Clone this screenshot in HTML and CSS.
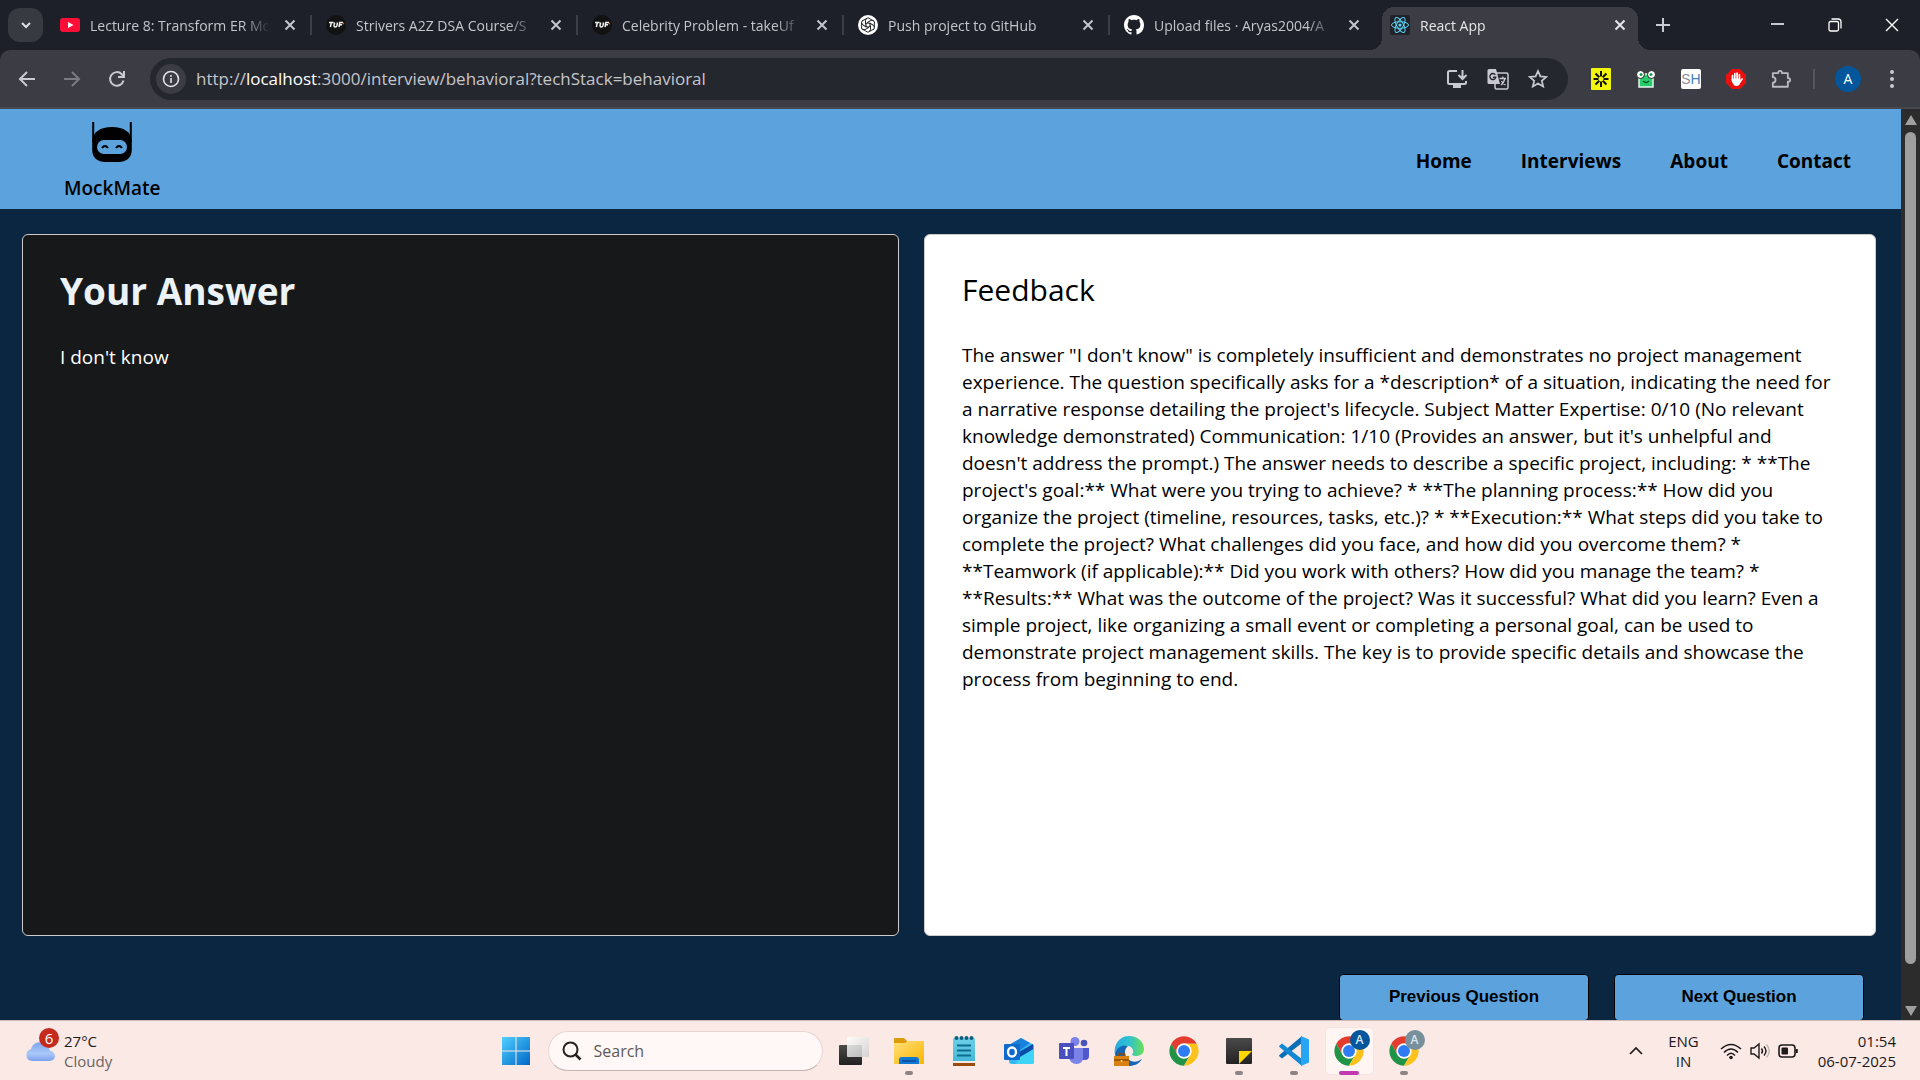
FILE: index.html
```html
<!DOCTYPE html>
<html lang="en">
<head>
<meta charset="utf-8">
<title>React App</title>
<link rel="stylesheet" href="styles.css">
</head>
<body>
<svg class="defs" width="0" height="0" aria-hidden="true">
  <defs>
    <linearGradient id="g-win" x1="0" y1="0" x2="1" y2="1"><stop offset="0" stop-color="#4fd0ff"/><stop offset="1" stop-color="#0067c8"/></linearGradient>
    <linearGradient id="g-dark" x1="0" y1="0" x2="0" y2="1"><stop offset="0" stop-color="#4a4a4a"/><stop offset="1" stop-color="#222"/></linearGradient>
    <linearGradient id="g-light" x1="0" y1="0" x2="1" y2="1"><stop offset="0" stop-color="#ffffff"/><stop offset="1" stop-color="#cfcfcf"/></linearGradient>
    <linearGradient id="g-folder" x1="0" y1="0" x2="1" y2="1"><stop offset="0" stop-color="#ffe07a"/><stop offset="1" stop-color="#f9b500"/></linearGradient>
    <linearGradient id="g-note" x1="0" y1="0" x2="0" y2="1"><stop offset="0" stop-color="#6fd0ea"/><stop offset="1" stop-color="#3fb4d6"/></linearGradient>
    <linearGradient id="g-edge" x1="0" y1="0" x2="1" y2="0"><stop offset="0" stop-color="#2aa9e0"/><stop offset=".5" stop-color="#2fc3cf"/><stop offset="1" stop-color="#6be052"/></linearGradient>
    <linearGradient id="g-cloud" x1="0" y1="0" x2="0" y2="1"><stop offset="0" stop-color="#7fa4ee"/><stop offset=".6" stop-color="#a9c8f8"/><stop offset="1" stop-color="#7ea2ec"/></linearGradient>
    <symbol id="close" viewBox="0 0 20 20"><path d="M5.500 5.500l9 9M14.500 5.500l-9 9" fill="none" stroke="currentColor" stroke-width="2"/></symbol>
    <symbol id="tuf" viewBox="0 0 20 20"><circle cx="10" cy="10" r="10" fill="#121212"/><path d="M3 7.500h4.500M5.300 7.500l-.9 4.500M8.600 7.500l-.6 3.200q0 1.200 1.300 1.200t1.600-1.200l.6-3.200M13 12l.8-4.500H17M13.400 9.800h2.600" fill="none" stroke="#f1f1f1" stroke-width="1.500"/><circle cx="17.300" cy="8.500" r=".9" fill="#d5562c"/></symbol>
    <symbol id="chrome" viewBox="0 0 48 48"><path d="M4.950 13A22 22 0 0 1 43.050 13L43.050 13H24L14.500 29.500z" fill="#e33b2e"/><path d="M4.950 13A22 22 0 0 0 24 46l9.500-16.500h-19z" fill="#1f9346"/><path d="M43.050 13A22 22 0 0 1 24 46l9.500-16.500L24 13z" fill="#fcc21b"/><circle cx="24" cy="24" r="11.500" fill="#fff"/><circle cx="24" cy="24" r="9" fill="#2f7bf2"/></symbol>
  </defs>
</svg>

<header class="browser">
  <div class="tabstrip">
    <button class="tab-search" aria-label="Search tabs"><svg width="16" height="16" viewBox="0 0 16 16"><path d="M4 6l4 4 4-4" fill="none" stroke="#dfe0e6" stroke-width="2"/></svg></button>
    <div class="tabs">
      <div class="tab">
        <svg class="fav" viewBox="0 0 20 20"><rect y="3" width="20" height="14" rx="3" fill="#ff0f38"/><path d="M8 7l5.500 3L8 13z" fill="#fff"/></svg>
        <span class="tab-title">Lecture 8: Transform ER Mo</span>
        <button class="tab-close" aria-label="Close tab"><svg><use href="#close"/></svg></button>
      </div>
      <div class="tab">
        <svg class="fav"><use href="#tuf"/></svg>
        <span class="tab-title">Strivers A2Z DSA Course/S</span>
        <button class="tab-close" aria-label="Close tab"><svg><use href="#close"/></svg></button>
      </div>
      <div class="tab">
        <svg class="fav"><use href="#tuf"/></svg>
        <span class="tab-title">Celebrity Problem - takeUf</span>
        <button class="tab-close" aria-label="Close tab"><svg><use href="#close"/></svg></button>
      </div>
      <div class="tab">
        <svg class="fav" viewBox="0 0 20 20"><circle cx="10" cy="10" r="10" fill="#fff"/><g fill="none" stroke="#222" stroke-width="1"><path id="petal" d="M10 7.700L7.500 9.200V5.500a2.600 2.600 0 0 1 4.700-1.500L15 5.700"/><use href="#petal" transform="rotate(60 10 10)"/><use href="#petal" transform="rotate(120 10 10)"/><use href="#petal" transform="rotate(180 10 10)"/><use href="#petal" transform="rotate(240 10 10)"/><use href="#petal" transform="rotate(300 10 10)"/></g></svg>
        <span class="tab-title">Push project to GitHub</span>
        <button class="tab-close" aria-label="Close tab"><svg><use href="#close"/></svg></button>
      </div>
      <div class="tab tab-last">
        <svg class="fav" viewBox="0 0 16 16"><path fill="#fff" d="M8 0C3.580 0 0 3.580 0 8c0 3.540 2.290 6.530 5.470 7.590.4.070.55-.17.55-.38 0-.19-.01-.82-.01-1.490-2.010.37-2.530-.49-2.690-.94-.09-.23-.48-.94-.82-1.130-.28-.15-.68-.52-.01-.53.63-.01 1.080.58 1.230.82.72 1.210 1.870.87 2.330.66.07-.52.28-.87.51-1.070-1.780-.2-3.640-.89-3.640-3.950 0-.87.31-1.590.82-2.150-.08-.2-.36-1.020.08-2.120 0 0 .67-.21 2.200.82.64-.18 1.320-.27 2-.27s1.360.09 2 .27c1.530-1.040 2.200-.82 2.200-.82.44 1.100.16 1.920.08 2.120.51.56.82 1.270.82 2.150 0 3.070-1.870 3.750-3.650 3.950.29.25.54.73.54 1.480 0 1.070-.01 1.930-.01 2.200 0 .21.15.46.55.38A8.010 8.010 0 0 0 16 8c0-4.420-3.580-8-8-8z"/></svg>
        <span class="tab-title">Upload files · Aryas2004/A</span>
        <button class="tab-close" aria-label="Close tab"><svg><use href="#close"/></svg></button>
      </div>
      <div class="tab tab-active">
        <svg class="fav" viewBox="0 0 20 20"><rect width="20" height="20" rx="2" fill="#20232a"/><g fill="none" stroke="#5fd3f3" stroke-width="1"><ellipse cx="10" cy="10" rx="8.500" ry="3.300"/><ellipse cx="10" cy="10" rx="8.500" ry="3.300" transform="rotate(60 10 10)"/><ellipse cx="10" cy="10" rx="8.500" ry="3.300" transform="rotate(120 10 10)"/></g><circle cx="10" cy="10" r="1.600" fill="#5fd3f3"/></svg>
        <span class="tab-title">React App</span>
        <button class="tab-close" aria-label="Close tab"><svg><use href="#close"/></svg></button>
      </div>
    </div>
    <button class="new-tab" aria-label="New tab"><svg width="14" height="14" viewBox="0 0 14 14"><path d="M7 0v14M0 7h14" stroke="#c9cad1" stroke-width="2"/></svg></button>
    <div class="window-controls">
      <button aria-label="Minimize"><svg width="14" height="14" viewBox="0 0 14 14"><path d="M0 6h13" stroke="#fff" stroke-width="1.500"/></svg></button>
      <button aria-label="Restore"><svg width="14" height="14" viewBox="0 0 14 14"><rect x="1" y="3.500" width="9.500" height="9.500" rx="1.500" fill="none" stroke="#fff" stroke-width="1.300"/><path d="M3.500 1h6.500q3 0 3 3v6.500" fill="none" stroke="#fff" stroke-width="1.300"/></svg></button>
      <button aria-label="Close"><svg width="14" height="14" viewBox="0 0 14 14"><path d="M1 1l12 12M13 1L1 13" stroke="#fff" stroke-width="1.400"/></svg></button>
    </div>
  </div>
  <div class="toolbar">
    <div class="history">
      <button aria-label="Back"><svg width="20" height="20" viewBox="0 0 20 20"><path d="M18 10H3M10 3l-7 7 7 7" fill="none" stroke="#c9cad1" stroke-width="2"/></svg></button>
      <button aria-label="Forward"><svg width="20" height="20" viewBox="0 0 20 20"><path d="M2 10h15M10 3l7 7-7 7" fill="none" stroke="#7b7c83" stroke-width="2"/></svg></button>
      <button aria-label="Reload"><svg width="20" height="20" viewBox="0 0 20 20"><path d="M16.500 11.500A6.800 6.800 0 1 1 14.800 5.200L17 7.500M17 2v6h-6" fill="none" stroke="#c9cad1" stroke-width="2"/></svg></button>
    </div>
    <div class="omnibox">
      <button class="site-info" aria-label="Site information"><svg width="18" height="18" viewBox="0 0 18 18"><circle cx="9" cy="9" r="7.500" fill="none" stroke="#e3e3e8" stroke-width="1.600"/><path d="M9 8v5M9 5v1.700" stroke="#e3e3e8" stroke-width="1.600"/></svg></button>
      <p class="url">http://<span class="host">localhost</span>:3000/interview/behavioral?techStack=behavioral</p>
      <button aria-label="Install app"><svg width="22" height="20" viewBox="0 0 22 20"><path d="M11 2H3.500Q2 2 2 3.500v10Q2 15 3.500 15h15q1.500 0 1.500-1.500V12M16.500 1v8M12.500 6l4 4 4-4" fill="none" stroke="#c9cad1" stroke-width="2"/><path d="M7 16h8v3H7z" fill="#c9cad1"/></svg></button>
      <button aria-label="Translate"><svg width="22" height="22" viewBox="0 0 22 22"><rect x="8" y="5" width="13" height="16" rx="1.500" fill="#25272e" stroke="#c9cad1" stroke-width="1.500"/><path d="M2 1h7l4 15H2q-1.500 0-1.500-1.500v-12Q.5 1 2 1z" fill="#c9cad1"/><path d="M8.300 6.800A3 3 0 1 0 8.800 9.200H6" fill="none" stroke="#25272e" stroke-width="1.400"/><path d="M12.500 10.500H19M15.800 8.500v2M18 10.500q-1 4-4 6.500M14.500 13q1.500 3 4 4" fill="none" stroke="#c9cad1" stroke-width="1.300"/></svg></button>
      <button aria-label="Bookmark this tab"><svg width="20" height="20" viewBox="0 0 20 20"><path d="M10 2l2.400 5.400 5.900.5-4.500 3.900 1.400 5.800L10 14.500l-5.200 3.100 1.400-5.800L1.700 7.900l5.900-.5z" fill="none" stroke="#c9cad1" stroke-width="1.700"/></svg></button>
    </div>
    <div class="extensions">
      <button aria-label="Asterisk extension"><svg width="20" height="22" viewBox="0 0 20 22"><rect width="20" height="22" rx="1" fill="#f2f50c"/><path d="M10 3v5.500M10 13.500V19M2.500 11H7.500M12.500 11h5M4.500 5.500l3.800 3.800M11.700 12.700l3.800 3.800M15.500 5.500l-3.800 3.800M8.300 12.700l-3.800 3.800" stroke="#111" stroke-width="2"/></svg></button>
      <button aria-label="Frog extension"><svg width="20" height="20" viewBox="0 0 20 20"><path d="M3 9L7 5h6l4 4v9H3z" fill="#23ce6b" stroke="#e9f3ea" stroke-width="1.500"/><path d="M7 12q3 3 6 0" fill="none" stroke="#0b4f29" stroke-width="1.200"/><g fill="#fff" stroke="#222" stroke-width="1"><circle cx="4.500" cy="5.500" r="4"/><circle cx="15.500" cy="5.500" r="4"/></g><circle cx="5" cy="5.500" r="1.500" fill="#159a4b"/><circle cx="15" cy="5.500" r="1.500" fill="#159a4b"/></svg></button>
      <button aria-label="SH extension"><span class="sh">S<b>H</b></span></button>
      <button aria-label="Ad blocker"><svg width="20" height="20" viewBox="0 0 20 20"><path d="M6 0h8l6 6v8l-6 6H6l-6-6V6z" fill="#ea1010"/><path d="M6.500 11V6.500M8.800 10V4.500M11.100 10V4M13.400 10.500V5.500" stroke="#fff" stroke-width="1.700" stroke-linecap="round"/><path d="M5.700 9.500h8.500V13q0 4-4 4-2.700 0-4.500-5z" fill="#fff"/><path d="M14 13l2-3" stroke="#fff" stroke-width="1.700" stroke-linecap="round"/></svg></button>
      <button aria-label="Extensions"><svg width="22" height="22" viewBox="0 0 22 22"><path d="M2 4.500h6V4a2 2 0 0 1 4 0v.5h6.500V10h.5a2 2 0 0 1 0 4h-.5v5.500H2V15a3 3 0 0 0 0-6z" fill="none" stroke="#b9bac2" stroke-width="2" stroke-linejoin="round"/></svg></button>
    </div>
    <span class="divider"></span>
    <button class="avatar" aria-label="Profile">A</button>
    <button class="menu" aria-label="Menu"><svg width="6" height="20" viewBox="0 0 6 20"><g fill="#c9cad1"><circle cx="3" cy="3" r="2"/><circle cx="3" cy="10" r="2"/><circle cx="3" cy="17" r="2"/></g></svg></button>
  </div>
</header>

<div class="viewport">
  <div class="page">
    <header class="site-header">
      <a class="brand" href="#">
        <svg width="42" height="42" viewBox="0 0 42 42"><path d="M2.200 1v20M39.800 1v20" stroke="#000" stroke-width="2"/><path d="M1.200 20C2 11 9 6 21 6s19 5 19.800 14v9c0 8-6 12-13 12H14C7 41 1.200 37 1.200 29z"/><rect x="6" y="19" width="30" height="14" rx="7" fill="#5ca2dc"/><path d="M11 27q3-4 6 0M25 27q3-4 6 0" fill="none" stroke="#000" stroke-width="2"/></svg>
        <span>MockMate</span>
      </a>
      <nav class="site-nav">
        <a href="#">Home</a>
        <a href="#">Interviews</a>
        <a href="#">About</a>
        <a href="#">Contact</a>
      </nav>
    </header>
    <main class="review">
      <section class="card card-answer">
        <h1>Your Answer</h1>
        <p>I don't know</p>
      </section>
      <section class="card card-feedback">
        <h2>Feedback</h2>
        <p>The answer "I don't know" is completely insufficient and demonstrates no project management experience. The question specifically asks for a *description* of a situation, indicating the need for a narrative response detailing the project's lifecycle. Subject Matter Expertise: 0/10 (No relevant knowledge demonstrated) Communication: 1/10 (Provides an answer, but it's unhelpful and doesn't address the prompt.) The answer needs to describe a specific project, including: * **The project's goal:** What were you trying to achieve? * **The planning process:** How did you organize the project (timeline, resources, tasks, etc.)? * **Execution:** What steps did you take to complete the project? What challenges did you face, and how did you overcome them? * **Teamwork (if applicable):** Did you work with others? How did you manage the team? * **Results:** What was the outcome of the project? Was it successful? What did you learn? Even a simple project, like organizing a small event or completing a personal goal, can be used to demonstrate project management skills. The key is to provide specific details and showcase the process from beginning to end.</p>
      </section>
    </main>
    <div class="actions">
      <button>Previous Question</button>
      <button>Next Question</button>
    </div>
  </div>
  <div class="scrollbar" aria-hidden="true">
    <span class="arrow arrow-up"></span>
    <span class="thumb"></span>
    <span class="arrow arrow-down"></span>
  </div>
</div>

<footer class="taskbar">
  <div class="weather">
    <span class="weather-icon">
      <svg width="30" height="20" viewBox="0 0 30 20"><path d="M7 19a6 6 0 0 1-1-11.800A9 9 0 0 1 22 4a7 7 0 0 1 3 5 5 5 0 0 1 0 10z" fill="url(#g-cloud)"/></svg>
      <span class="count">6</span>
    </span>
    <p>27°C<br><span class="muted">Cloudy</span></p>
  </div>
  <div class="dock">
    <button class="app" aria-label="Start"><svg width="30" height="30" viewBox="0 0 30 30"><path d="M1 1h13.500v13.500H1zM15.500 1H29v13.500H15.500zM1 15.500h13.500V29H1zM15.500 15.500H29V29H15.500z" fill="url(#g-win)"/></svg></button>
    <label class="search">
      <svg width="20" height="20" viewBox="0 0 20 20"><circle cx="8.500" cy="8.500" r="7" fill="none" stroke="#262222" stroke-width="2"/><path d="M13.500 13.500l5 5" stroke="#262222" stroke-width="2.500"/></svg>
      <input type="text" placeholder="Search" aria-label="Search">
    </label>
    <button class="app" aria-label="Task view"><svg width="30" height="30" viewBox="0 0 30 30"><rect y="9" width="23" height="20" rx="1" fill="url(#g-dark)"/><rect x="8" y="1" width="22" height="20" rx="1" fill="url(#g-light)" opacity=".85"/></svg></button>
    <button class="app running" aria-label="File Explorer"><svg width="30" height="30" viewBox="0 0 30 30"><path d="M0 3q0-1 1-1h9l3 3v5H0z" fill="#dc9b08"/><path d="M0 7h11l3-2h15q1 0 1 1v22H0z" fill="url(#g-folder)"/><path d="M5 28v-4q0-3 3-3h14q3 0 3 3v4z" fill="#0f78d4"/><path d="M8 25h14" stroke="#0a4a93" stroke-width="1.500"/></svg></button>
    <button class="app" aria-label="Notepad"><svg width="30" height="30" viewBox="0 0 30 30"><rect x="4" y="2" width="22" height="26" rx="1" fill="url(#g-note)"/><path d="M4 26h22" stroke="#f3e9e2" stroke-width="2"/><path d="M4 28.500h22" stroke="#9a4a0c" stroke-width="3"/><path d="M8 9.500h14M8 14.500h14M8 19.500h14" stroke="#0c6d8c" stroke-width="2"/><g fill="#0e5f7d"><circle cx="7.500" cy="2" r="2"/><circle cx="12.500" cy="2" r="2"/><circle cx="17.500" cy="2" r="2"/><circle cx="22.500" cy="2" r="2"/></g></svg></button>
    <button class="app" aria-label="Outlook"><svg width="30" height="30" viewBox="0 0 30 30"><path d="M5 9l12-7 13 7v17q0 2-2 2H8q-3 0-3-3z" fill="#35b7f1"/><path d="M5 9l12-7 9 5-14 10z" fill="#1a82dc"/><path d="M15 16L29 8v5L16 22z" fill="#0a4ca8"/><path d="M14 22l16-9v13q0 2-2 2H12z" fill="#3fd3f5"/><rect y="8" width="16" height="16" rx="1" fill="#0f6bcb"/><ellipse cx="8" cy="16" rx="4" ry="4.500" fill="none" stroke="#fff" stroke-width="2.300"/></svg></button>
    <button class="app" aria-label="Teams"><svg width="30" height="30" viewBox="0 0 30 30"><circle cx="25" cy="7" r="3.300" fill="#4b53bc"/><circle cx="16" cy="5.500" r="4.500" fill="#7b83eb"/><path d="M22 12h8v8q0 4-4 4h-4z" fill="#5059c9"/><path d="M10 12h14v9q0 7-6.500 7T10 21z" fill="#7b83eb"/><rect y="7" width="15" height="16" rx="1" fill="#4a4fbf"/><path d="M4 12h7M7.500 12v8" stroke="#fff" stroke-width="2"/></svg></button>
    <button class="app" aria-label="Edge"><svg width="30" height="30" viewBox="0 0 30 30"><path d="M1 19C-1 8 6 0 15 0c9 0 15 6 15 13 0 5-4 7-8 7-3 0-4-1-4-2 2-1 2-7-4-8C7 9 1 13 1 19z" fill="url(#g-edge)"/><path d="M1 17c2-6 8-9 13-7-3 2-5 8 0 13 4 4 10 3 14 0-3 5-8 7-13 7C7 30 1 25 1 17z" fill="#1266b8"/><rect x="0" y="20" width="15" height="10" fill="#d98213"/><path d="M4.500 20v-2h6v2M0 24h15" fill="none" stroke="#8a4a08" stroke-width="1.500"/><circle cx="7.500" cy="25" r="1" fill="#ffd84a"/></svg></button>
    <button class="app" aria-label="Chrome"><svg width="32" height="32"><use href="#chrome"/></svg></button>
    <button class="app running" aria-label="Sticky Notes"><svg width="30" height="30" viewBox="0 0 30 30"><rect x="2" y="2" width="26" height="26" rx="1" fill="url(#g-dark)"/><path d="M15 15h13L15 28z" fill="#ffd800"/></svg></button>
    <button class="app running" aria-label="Visual Studio Code"><svg width="30" height="30" viewBox="0 0 30 30"><path d="M0 20l3 2.500L23 7V0L1 18.500q-1 .8-1 1.500z" fill="#0b6fb8"/><path d="M0 10l3-2.500L23 23v7L1 11.500Q0 10.800 0 10z" fill="#1389d6"/><path d="M22 0l8 3.500v23L22 30z" fill="#27a5f2"/></svg></button>
    <button class="app running current" aria-label="Chrome, profile A"><svg width="32" height="32"><use href="#chrome"/></svg><span class="profile">A</span></button>
    <button class="app running" aria-label="Chrome, second profile"><svg width="32" height="32"><use href="#chrome"/></svg><span class="profile profile-gray">A</span></button>
  </div>
  <div class="tray">
    <button aria-label="Show hidden icons"><svg width="14" height="10" viewBox="0 0 14 10"><path d="M1 8l6-6 6 6" fill="none" stroke="#1d1a1a" stroke-width="1.700"/></svg></button>
    <p class="lang">ENG<br>IN</p>
    <div class="status">
      <svg width="22" height="18" viewBox="0 0 22 18"><path d="M1 7q10-9 20 0M4 10.500q7-7 14 0M7 13.500q4-4.500 8 0" fill="none" stroke="#1d1a1a" stroke-width="1.500"/><circle cx="11" cy="15.500" r="1.800" fill="#1d1a1a"/></svg>
      <svg width="20" height="18" viewBox="0 0 20 18"><path d="M1 6h3l5-4v14l-5-4H1z" fill="none" stroke="#1d1a1a" stroke-width="1.400"/><path d="M11.500 6.500q2 2.500 0 5M14 4.500q4 4.500 0 9" fill="none" stroke="#1d1a1a" stroke-width="1.400"/><path d="M16.500 2.500q5.500 6.500 0 13" fill="none" stroke="#bfb3b1" stroke-width="1.300"/></svg>
      <svg width="20" height="14" viewBox="0 0 20 14"><rect x="1" y="1" width="16" height="12" rx="3" fill="none" stroke="#1d1a1a" stroke-width="1.600"/><rect x="3.500" y="3.500" width="6.500" height="7" rx="1" fill="#1d1a1a"/><path d="M18.800 5v4" stroke="#1d1a1a" stroke-width="2"/></svg>
    </div>
    <p class="clock">01:54<br>06-07-2025</p>
  </div>
</footer>
</body>
</html>
```
FILE: styles.css
```css
* { box-sizing: border-box; }

body {
  margin: 0;
  height: 100vh;
  display: flex;
  flex-direction: column;
  overflow: hidden;
  background: #0b2641;
  font-family: "Open Sans", "Noto Sans", sans-serif;
}

p, h1, h2 { margin: 0; }
a { color: inherit; text-decoration: none; }
.defs { position: absolute; }

button {
  margin: 0;
  padding: 0;
  border: 0;
  background: none;
  color: inherit;
  font: inherit;
  display: flex;
  align-items: center;
  justify-content: center;
}

/* Browser chrome */
.browser { background: #1d2028; flex: none; }

.tabstrip {
  height: 50px;
  display: flex;
  align-items: center;
  padding-left: 8px;
  color: #c3c5cc;
}

.tab-search {
  flex: none;
  width: 35px;
  height: 34px;
  margin-right: 3px;
  border-radius: 12px;
  background: #383a42;
}

.tabs { display: flex; flex: 0 1 1596px; height: 100%; min-width: 0; }

.tab {
  flex: 1 1 0;
  min-width: 0;
  display: flex;
  align-items: center;
  gap: 10px;
  padding-left: 14px;
  position: relative;
}
.tab::after { content: ""; width: 2px; height: 20px; background: #3d3f48; }
.tab-last::after, .tab-active::after { background: transparent; }

.fav { width: 20px; height: 20px; flex: none; z-index: 1; }

.tab-title {
  flex: 1;
  padding-top: 1px;
  overflow: hidden;
  white-space: nowrap;
  font-size: 14px;
  line-height: 20px;
  z-index: 1;
  -webkit-mask-image: linear-gradient(to right, #000 85%, transparent);
  mask-image: linear-gradient(to right, #000 85%, transparent);
}
.tab-close { width: 20px; height: 20px; z-index: 1; }
.tab-close svg { width: 20px; height: 20px; }

.tab-active { color: #e6e6ea; }
.tab-active::before {
  content: "";
  position: absolute;
  inset: 7px -8px 0 -6px;
  background:
    radial-gradient(circle at 0 0, transparent 12px, #3b3c44 12px) left bottom / 12px 12px no-repeat,
    radial-gradient(circle at 100% 0, transparent 12px, #3b3c44 12px) right bottom / 12px 12px no-repeat,
    radial-gradient(circle at 12px 12px, #3b3c44 12px, transparent 12px) 12px 0 / 12px 12px no-repeat,
    radial-gradient(circle at 0 12px, #3b3c44 12px, transparent 12px) calc(100% - 12px) 0 / 12px 12px no-repeat,
    linear-gradient(#3b3c44, #3b3c44) 50% 0 / calc(100% - 48px) 100% no-repeat,
    linear-gradient(#3b3c44, #3b3c44) 50% 100% / calc(100% - 24px) calc(100% - 12px) no-repeat;
}

.new-tab { flex: none; width: 42px; height: 34px; z-index: 1; }

.window-controls { display: flex; margin-left: auto; }
.window-controls button { width: 57px; height: 50px; }

.toolbar {
  height: 59px;
  display: flex;
  align-items: center;
  padding: 0 25px 0 17px;
  border-bottom: 2px solid #48494f;
  border-radius: 10px 10px 0 0;
  background: #3b3c44;
}

.history { display: flex; gap: 25px; margin-right: 23px; }

.omnibox {
  flex: 1;
  min-width: 0;
  height: 42px;
  display: flex;
  align-items: center;
  gap: 19px;
  padding: 0 20px 0 6px;
  border-radius: 21px;
  background: #25272e;
}
.site-info { flex: none; width: 30px; height: 30px; border-radius: 50%; background: #3b3c44; }
.url { flex: 1; margin-left: -9px; overflow: hidden; white-space: nowrap; font-size: 17px; line-height: 24px; color: #c5c6cb; }
.host { color: #fff; }

.extensions { display: flex; align-items: center; gap: 25px; margin-left: 23px; }
.extensions button { width: 20px; height: 22px; }
.sh { width: 20px; height: 20px; border-radius: 2px; background: #fff; color: #8b8f96; font-size: 14px; line-height: 20px; text-align: center; font-family: "Liberation Sans", sans-serif; }
.sh b { color: #3f7fc4; font-weight: 400; }
.divider { width: 2px; height: 20px; margin: 0 20px 0 22px; background: #55565e; }
.avatar { width: 26px; height: 26px; border-radius: 50%; background: #04569c; color: #fff; font-size: 14px; }
.menu { width: 6px; margin-left: 28px; }

/* Page */
.viewport { flex: 1; min-height: 0; display: flex; overflow: hidden; }
.page { flex: 1; min-width: 0; color: #000; }

.site-header {
  height: 100px;
  display: flex;
  align-items: center;
  justify-content: space-between;
  padding: 2px 50px 0 64px;
  background: #5ca2dc;
}
.brand {
  display: flex;
  flex-direction: column;
  align-items: center;
  gap: 13px;
  font-size: 19px;
  line-height: 24px;
  font-weight: 600;
}
.site-nav { display: flex; gap: 49px; padding-top: 2px; font-size: 19px; line-height: 26px; font-weight: 700; }

.review {
  display: grid;
  grid-template-columns: 877fr 952fr;
  gap: 25px;
  padding: 25px 25px 0 22px;
}
.card {
  min-height: 702px;
  padding: 31px 36px 38px 37px;
  border: 1px solid #ccc;
  border-radius: 6px;
  font-size: 19px;
  line-height: 27px;
}
.card-answer { background: #17181a; color: #fff; }
.card-answer h1 { margin-bottom: 28px; font-size: 37px; line-height: 50px; color: #ebf3f6; }
.card-feedback { background: #fff; }
.card-feedback h2 { margin-bottom: 28px; font-size: 30px; line-height: 48px; font-weight: 400; }

.actions { display: flex; justify-content: flex-end; gap: 25px; padding: 38px 37px 0; }
.actions button {
  width: 250px;
  height: 47px;
  padding-bottom: 2px;
  border: 1px solid #000;
  border-radius: 4px;
  background: #5ca2dc;
  font-family: "Liberation Sans", Arial, sans-serif;
  font-size: 17px;
  font-weight: 700;
}

.scrollbar {
  flex: none;
  width: 19px;
  display: flex;
  flex-direction: column;
  align-items: center;
  padding: 6px 0 4px;
  background: #2c2c2c;
}
.arrow { border: 6px solid transparent; }
.arrow-up { border-top-width: 0; border-bottom: 10px solid #9f9f9f; }
.arrow-down { border-bottom-width: 0; border-top: 10px solid #9f9f9f; }
.thumb { flex: 1; width: 11px; margin: 7px 0 42px; border-radius: 6px; background: #9f9f9f; }

/* Taskbar */
.taskbar {
  flex: none;
  height: 60px;
  display: grid;
  grid-template-columns: 1fr auto 1fr;
  align-items: center;
  border-top: 1px solid #c9bab9;
  background: #fbe9e6;
  color: #1d1a1a;
  font-size: 15px;
  line-height: 20px;
}
.weather { display: flex; align-items: center; gap: 9px; padding-left: 25px; }
.weather-icon { position: relative; display: flex; padding-top: 2px; }
.count {
  position: absolute;
  left: 14px;
  top: -12px;
  width: 20px;
  height: 20px;
  border-radius: 50%;
  background: #c42b1c;
  color: #fff;
  text-align: center;
}
.muted { color: #6a6261; }

.dock { display: flex; align-items: center; }
.app { position: relative; width: 55px; height: 48px; }
.search {
  width: 275px;
  height: 40px;
  margin: 0 4px;
  display: flex;
  align-items: center;
  gap: 12px;
  padding: 0 13px;
  border: 1px solid #e6d5d3;
  border-bottom-color: #c5b6b5;
  border-radius: 20px;
  background: #fff8f6;
}
.search input { flex: 1; min-width: 0; padding: 0; border: 0; outline: 0; background: none; font: inherit; font-size: 16px; line-height: 24px; }
.search input::placeholder { color: #5f5857; opacity: 1; }
.running::after {
  content: "";
  position: absolute;
  left: 50%;
  bottom: 0;
  width: 8px;
  height: 4px;
  border-radius: 2px;
  background: #8d8483;
  transform: translateX(-50%);
}
.current::before {
  content: "";
  position: absolute;
  inset: 0 3px;
  border: 1px solid #f5e4e1;
  border-radius: 5px;
  background: #fff5f3;
}
.current svg { position: relative; }
.current::after { width: 20px; background: #c239b3; }
.profile {
  position: absolute;
  left: 28px;
  top: 3px;
  width: 20px;
  height: 20px;
  border-radius: 50%;
  background: #04569c;
  color: #d8e6f3;
  font-size: 12px;
  font-weight: 600;
  text-align: center;
}
.profile-gray { background: #78909c; }

.tray { display: flex; align-items: center; justify-content: flex-end; padding-right: 24px; }
.lang { margin: 0 21px 0 25px; text-align: center; }
.status { display: flex; align-items: center; gap: 8px; margin-right: 20px; }
.clock { text-align: right; }
```
